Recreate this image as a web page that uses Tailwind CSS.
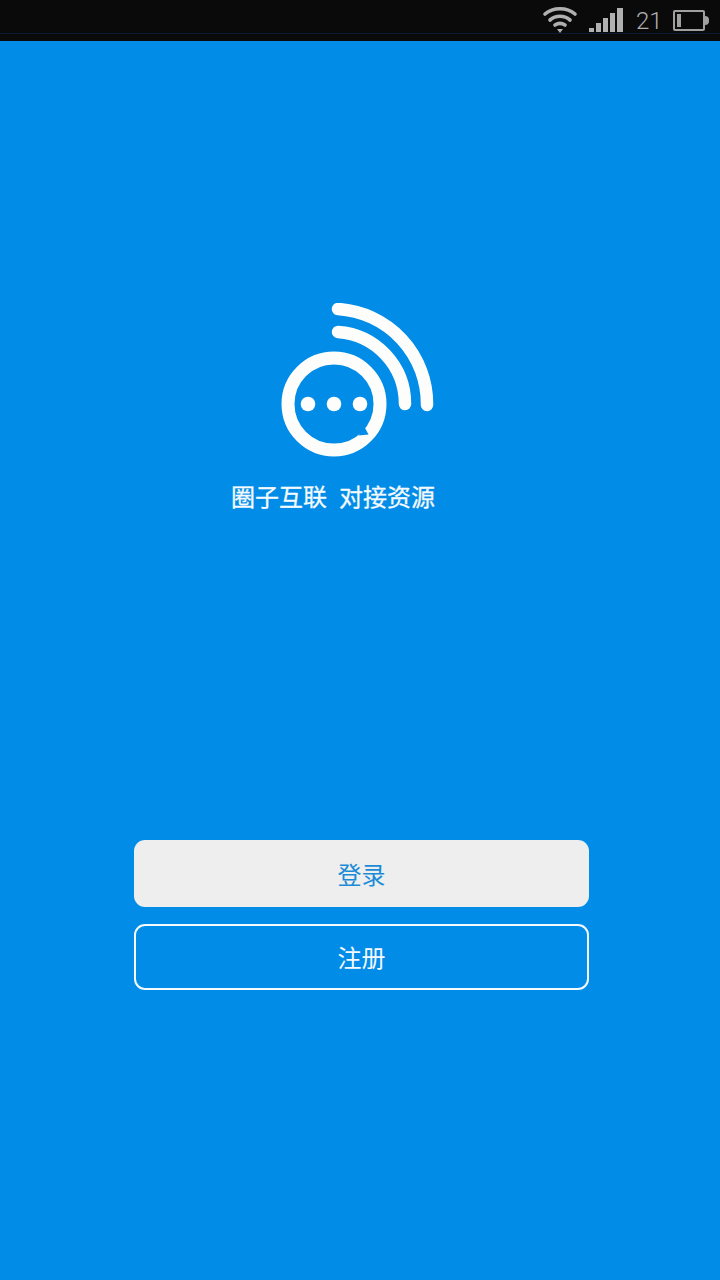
<!DOCTYPE html>
<html lang="zh-CN">

<head>
    <meta charset="UTF-8">
    <meta name="viewport" content="width=device-width, initial-scale=1.0">
    <title>圈子互联</title>
    <script src="https://cdn.jsdelivr.net/npm/@tailwindcss/browser@4"></script>
</head>

<body class="m-0">
    <div class="w-[720px] h-[1280px] overflow-hidden bg-[#018ce7] font-['Noto_Sans_CJK_SC','Noto_Sans',sans-serif]">

        <!-- status bar -->
        <div class="relative h-[41px] bg-[#0b0a0b] flex items-center pl-[542px]">
            <div class="absolute left-0 right-0 top-[33px] h-[1px] bg-[#0c1b33]"></div>
            <svg class="w-[36px] h-[30px] mt-[-3px]" viewBox="0 0 36 30" fill="none" stroke="#b0b0b0" stroke-width="3.6" stroke-linecap="round">
                <path d="M3 10C11 3 25 3 33 10" />
                <path d="M8 16C14 11 22 11 28 16" />
                <path d="M13 21C16 19 20 19 23 21" />
                <path d="M15 25h6l-3 4z" fill="#b0b0b0" stroke="none" />
            </svg>
            <div class="flex items-end gap-[2px] h-[24px] ml-[11px] mt-[-1px]">
                <div class="w-[5px] h-[4px] bg-[#b0b0b0]"></div>
                <div class="w-[5px] h-[9px] bg-[#b0b0b0]"></div>
                <div class="w-[5px] h-[14px] bg-[#b0b0b0]"></div>
                <div class="w-[5px] h-[19px] bg-[#b0b0b0]"></div>
                <div class="w-[6px] h-[24px] bg-[#b0b0b0]"></div>
            </div>
            <span class="ml-[13px] mt-[1px] text-[24px] leading-none text-[#b0b0b0] font-['Roboto',sans-serif] font-light">21</span>
            <div class="flex items-center ml-[10px]">
                <div class="w-[32px] h-[21px] border-[2px] border-[#a0a0a0] rounded-[2px] py-[2px] pl-[2px]">
                    <div class="w-[4px] h-full bg-[#a0a0a0]"></div>
                </div>
                <div class="w-[4px] h-[9px] bg-[#a0a0a0] rounded-r-[4px]"></div>
            </div>
        </div>

        <!-- logo -->
        <div class="flex flex-col items-start pl-[231px] pt-[262px]">
            <svg class="w-[160px] h-[155px] ml-[46px]" viewBox="0 0 160 155" fill="none" stroke="#fdfdfb" stroke-linecap="round">
                <circle cx="57" cy="101" r="46" stroke-width="13" />
                <path d="M87 123l4.500 8.500-10 1z" fill="#018ce7" stroke="none" />
                <path d="M61 6A95 95 0 0 1 150 102" stroke-width="12.500" />
                <path d="M61 29A72 72 0 0 1 128 101" stroke-width="12.500" />
                <g fill="#fdfdfb" stroke="none">
                    <circle cx="31" cy="101" r="7.300" />
                    <circle cx="57" cy="101" r="7.300" />
                    <circle cx="83" cy="101" r="7.300" />
                </g>
            </svg>
            <p class="mt-[18px] text-[24px] leading-[40px] text-[#f4fafd] [-webkit-text-stroke:0.3px_#f4fafd] whitespace-pre">圈子互联<span class="inline-block w-[12px]"></span>对接资源</p>
        </div>

        <!-- buttons -->
        <div class="flex flex-col gap-[17px] ml-[134px] mt-[324px] w-[455px]">
            <button class="h-[67px] rounded-[11px] bg-[#eeeeee] text-[24px] text-[#1a8bd6]">登录</button>
            <button class="h-[66px] rounded-[11px] border-[2px] border-[#f4fafd] text-[24px] text-[#f4fafd]">注册</button>
        </div>
    </div>
</body>

</html>
